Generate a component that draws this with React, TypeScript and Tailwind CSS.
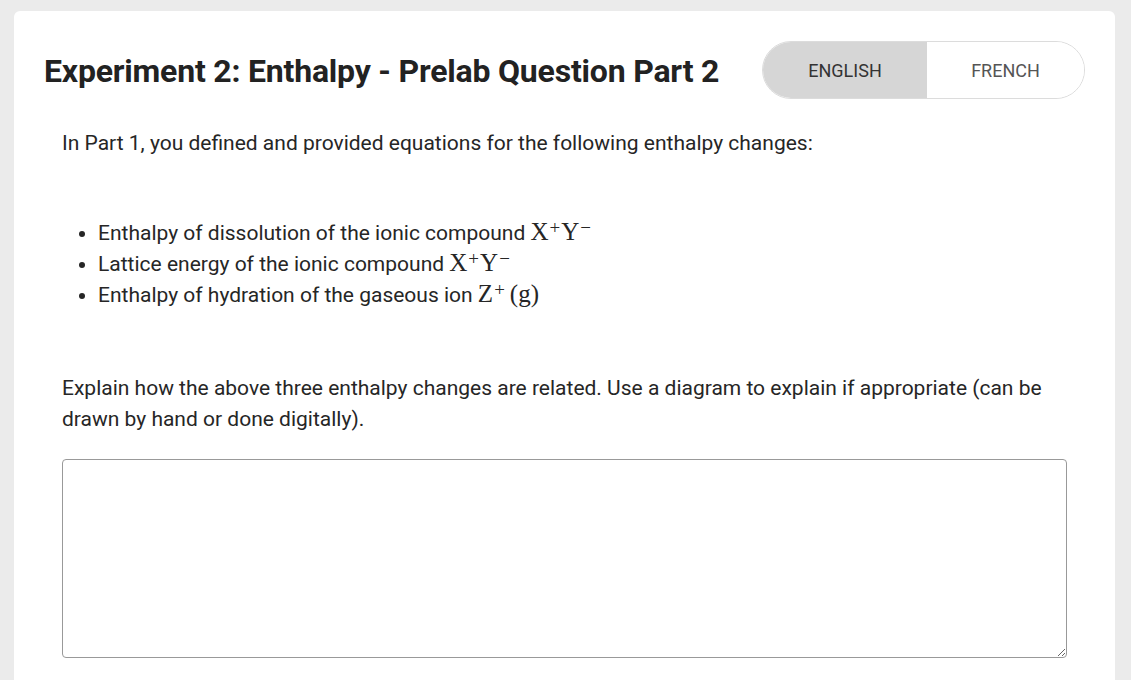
import React from 'react';

function Ion({ base, sup }: { base: string; sup: string }) {
  return (
    <span className="font-['Liberation_Serif',serif] text-[25px] leading-none">
      <span className="tracking-[1px]">{base}</span>
      <sup className="text-[19px] relative -top-[6px] align-baseline pr-[1px]">{sup}</sup>
    </span>
  );
}

export default function App(): React.JSX.Element {
  return (
    <div className="min-h-screen bg-[#ebebeb] px-[14px] pt-[11px] font-['Roboto',sans-serif] text-[#212121]">
      <div className="bg-white rounded-md w-[1101px] min-h-[700px] pl-[30px] pr-[30px] pt-[30px]">
        <div className="flex items-center justify-between">
          <h1 className="text-[32px] font-bold leading-tight tracking-[-0.2px] text-[#222] mt-[2px]">
            Experiment 2: Enthalpy - Prelab Question Part 2
          </h1>
          <div className="flex h-[58px] w-[323px] rounded-full border border-[#dcdcdc] overflow-hidden text-[18px]">
            <button className="w-[164px] bg-[#d6d6d6] text-[#333] uppercase">English</button>
            <button className="flex-1 bg-white text-[#555] uppercase">French</button>
          </div>
        </div>

        <div className="pl-[18px] pr-[18px] text-[21px] leading-[31px] text-[#262626]">
          <p className="mt-[29px]">In Part 1, you defined and provided equations for the following enthalpy changes:</p>

          <ul className="list-disc pl-[36px] mt-[59px]">
            <li>
              Enthalpy of dissolution of the ionic compound <Ion base="X" sup="+" />
              <Ion base="Y" sup="−" />
            </li>
            <li>
              Lattice energy of the ionic compound <Ion base="X" sup="+" />
              <Ion base="Y" sup="−" />
            </li>
            <li>
              Enthalpy of hydration of the gaseous ion <Ion base="Z" sup="+" />
              <span className="font-['Liberation_Serif',serif] text-[25px] leading-none ml-[4px]">(g)</span>
            </li>
          </ul>

          <p className="mt-[62px]">
            Explain how the above three enthalpy changes are related. Use a diagram to explain if appropriate (can be
            drawn by hand or done digitally).
          </p>

          <textarea className="mt-[24px] block w-[1005px] h-[199px] border border-[#999] rounded-[4px] outline-none p-2" />
        </div>
      </div>
    </div>
  );
}
